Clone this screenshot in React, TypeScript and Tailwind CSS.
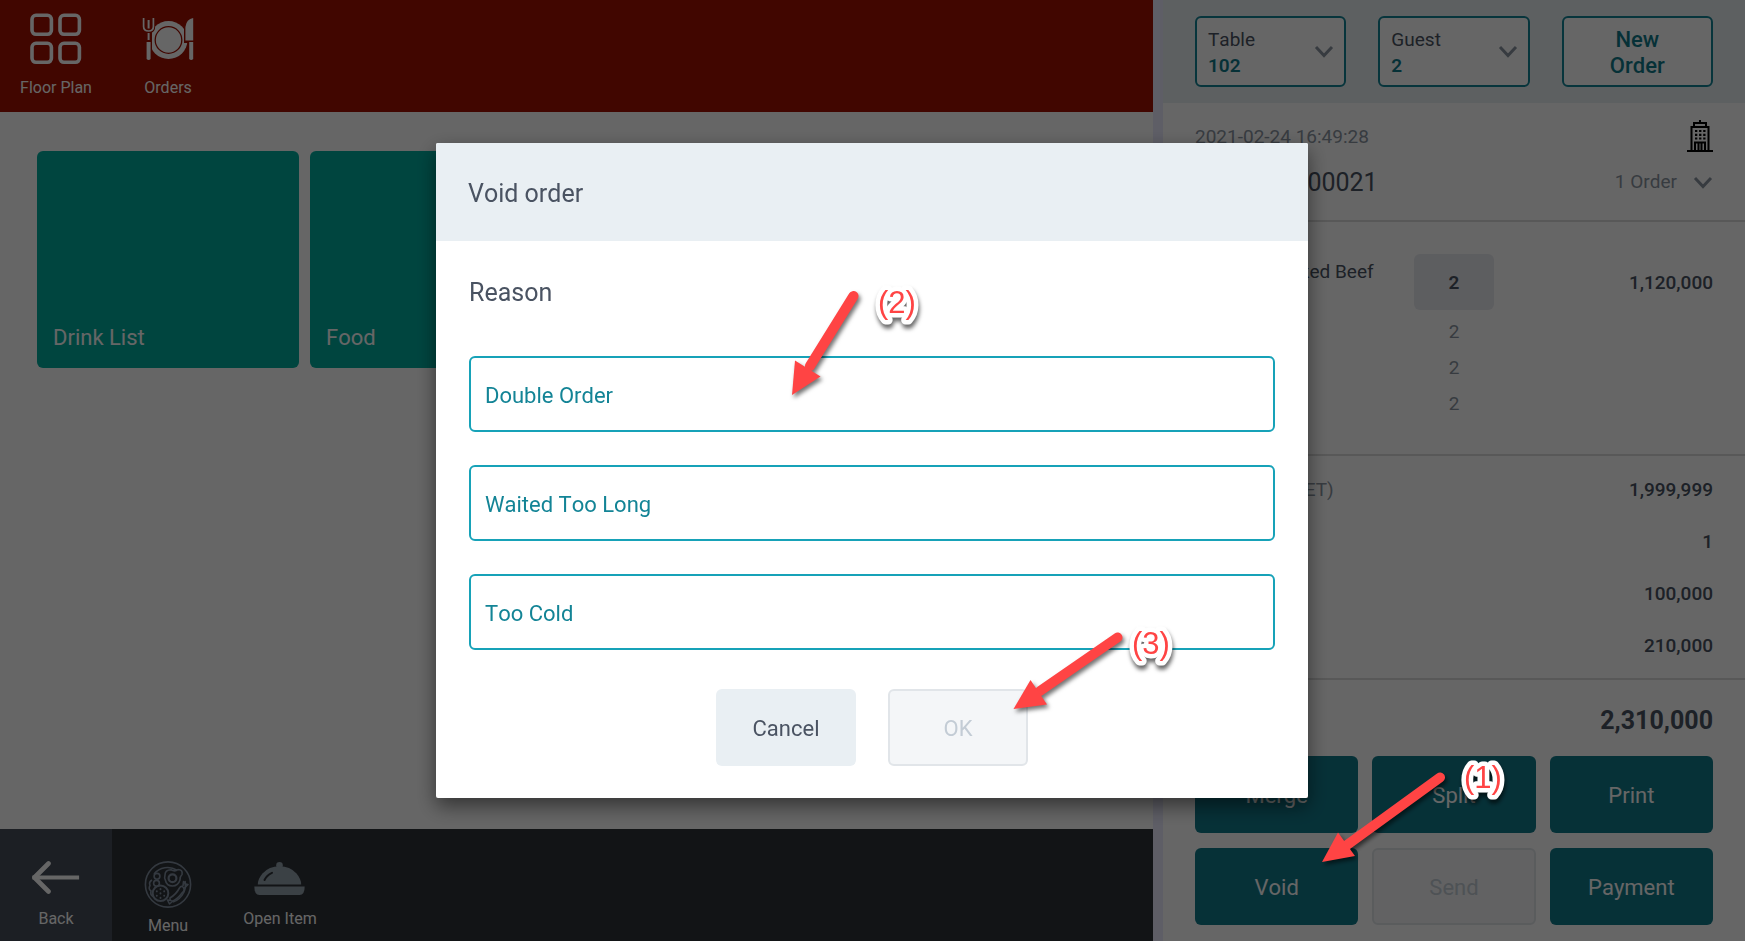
import { useState, type ReactNode } from 'react';

const categories = ['Drink List', 'Food'];

const reasons = ['Double Order', 'Waited Too Long', 'Too Cold'];

const totals = [
  { label: 'Sub Total: (NET)', value: '1,999,999' },
  { label: 'Discount', value: '1' },
  { label: 'Service', value: '100,000' },
  { label: 'VAT', value: '210,000' },
];

const actions = [
  { name: 'Merge' },
  { name: 'Split' },
  { name: 'Print' },
  { name: 'Void' },
  { name: 'Send', disabled: true },
  { name: 'Payment' },
];

function FloorPlanIcon() {
  return (
    <svg width="52" height="52" viewBox="0 0 52 52" fill="none" stroke="currentColor" strokeWidth="3.6">
      <rect x="2" y="2.3" width="19.4" height="19" rx="4" />
      <rect x="30" y="2.3" width="19.4" height="19" rx="4" />
      <rect x="2" y="30.3" width="19.4" height="19" rx="4" />
      <rect x="30" y="30.3" width="19.4" height="19" rx="4" />
    </svg>
  );
}

function OrdersIcon() {
  return (
    <svg width="52" height="52" viewBox="0 0 52 52" fill="currentColor">
      <circle cx="26.5" cy="27" r="19" />
      <circle cx="26.5" cy="27" r="13.3" fill="none" stroke="#a31000" strokeWidth="1.3" />
      {/* fork */}
      <path
        d="M0.8 5 V13 Q0.8 18.5 4.8 18.8 V46 Q6.8 48.5 9 46 V18.8 Q12.2 18 12.2 13 V5 Z"
        fill="#a31000"
        stroke="#a31000"
        strokeWidth="2"
      />
      <path d="M1.6 5 V13.5 Q1.6 18 6.6 18 Q11.4 18 11.4 13.5 V5" fill="none" stroke="currentColor" strokeWidth="1.7" />
      <path d="M5.6 7 H7.6 V15.5 H5.6 Z M5.6 20 H7.6 V27 H5.6 Z M4.6 29 H8.6 V46 Q6.6 48 4.6 46 Z" />
      {/* knife */}
      <path d="M51.2 5 V46.5 H46.5 V29 H43 V14 Q44 6 51.2 5 Z" fill="#a31000" stroke="#a31000" strokeWidth="2" />
      <path d="M51.2 5 V27.4 H43.4 V14 Q44.4 6 51.2 5 Z M47.2 29 H51.2 V46 Q49.2 48 47.2 46 Z" />
    </svg>
  );
}

function BackIcon() {
  return (
    <svg width="48" height="40" viewBox="0 0 48 40" fill="none" stroke="currentColor" strokeLinecap="round">
      <path d="M2.5 16.5 H45" strokeWidth="4.2" strokeLinecap="square" />
      <path d="M16.5 2.5 L2.5 16.5 L16.5 30.5" strokeWidth="4.6" strokeLinejoin="round" />
    </svg>
  );
}

function MenuIcon() {
  return (
    <svg width="48" height="47" viewBox="0 0 48 47" fill="none" stroke="currentColor" strokeWidth="1.6" strokeLinejoin="round">
      <circle cx="24" cy="23.5" r="22.6" />
      <path d="M10 13 A17.5 17.5 0 0 1 33 9.2" />
      <path d="M8 19 Q4.5 21 6 24.5 Q4 28 7 30 Q6 34 9 35.5" />
      <path d="M41 20 A17.5 17.5 0 0 1 40 31 Q36 39 29 41" />
      {/* egg */}
      <path d="M21 14 Q21 9 27 8.8 Q31 11 34 8.5 Q39 8.5 38 13.5 Q35.5 16 36 19 Q34 25 28.5 25 Q22.5 25 21.5 19.5 Q20 17 21 14 Z" />
      <circle cx="28.5" cy="17.3" r="3.9" strokeWidth="2.2" />
      {/* tomatoes */}
      <circle cx="13" cy="15.3" r="2.9" />
      <circle cx="12.5" cy="22.3" r="2.9" />
      {/* cracker */}
      <circle cx="16.5" cy="32.3" r="7.8" strokeWidth="2" />
      <path
        d="M16.5 28 v.2 M12.8 30.2 v.2 M20.2 30.2 v.2 M16.5 32.3 v.2 M12.8 34.6 v.2 M20.2 34.6 v.2 M16.5 36.8 v.2"
        strokeWidth="1.9"
        strokeLinecap="round"
      />
      {/* sausage */}
      <path d="M38.5 25.5 Q42 29 38 32 Q33.5 38 29 40 Q25.5 40 26 37 Q32 33.5 35.5 27 Q36.5 25 38.5 25.5 Z" />
      <path d="M39 25 L39.5 20.5 L41.5 23 L44 23.5 L40.5 27 M27 39.5 L23.5 39 L25.5 43 L29 40" />
    </svg>
  );
}

function ClocheIcon() {
  return (
    <svg width="52" height="40" viewBox="0 0 52 40" fill="currentColor">
      <circle cx="25.5" cy="4.2" r="3.3" />
      <path d="M3.8 23.5 Q3.8 18 8.5 12.5 Q15 5.3 25.5 5.3 Q36 5.3 42.500 12.500 Q47.200 18 47.200 23.500 Z" />
      <path d="M0.300 25.500 H50.700 Q50.700 34 45.500 34 H5.500 Q0.300 34 0.300 25.500 Z" />
      <path d="M10.500 19 Q12.500 14.500 18 11.800" fill="none" stroke="#2e3238" strokeWidth="2" strokeLinecap="round" />
    </svg>
  );
}

function BuildingIcon() {
  return (
    <svg width="26" height="32" viewBox="0 0 26 32" fill="none" stroke="#000" strokeWidth="2">
      <path d="M0 31 H26" />
      <path d="M4.5 31 V7 H21.5 V31" />
      <path d="M7 6.5 V3 H19 V6.5 M13 0 V3" />
      <path d="M8 11 H18.5 M8 14.8 H18.5 M8 18.5 H18.5" strokeDasharray="2.3 1.8" strokeWidth="2.2" />
      <path d="M8 31 V22.5 H18 V31 M11.5 23 V31 M14.5 23 V31" />
    </svg>
  );
}

function Chevron() {
  return (
    <svg className="shrink-0 text-[#8b95a1]" width="20" height="13" viewBox="0 0 20 13" fill="none" stroke="currentColor" strokeWidth="3">
      <path d="M2 2 L10 10.5 L18 2" />
    </svg>
  );
}

function NavItem({ label, icon }: { label: string; icon: ReactNode }) {
  return (
    <button className="flex w-28 flex-col items-center gap-[11px] pt-[13px] text-base text-white">
      {icon}
      {label}
    </button>
  );
}

function PickerBox({ label, value }: { label: string; value: string }) {
  return (
    <label className="flex h-[71px] items-center rounded-md border-2 border-[#138496] bg-white pl-[11px] pr-2.5 text-[19px] leading-[26px] text-[#4a5362]">
      <span className="flex min-w-0 flex-1 flex-col pt-0.5">
        {label}
        <select className="w-full appearance-none bg-transparent font-semibold text-[#117a8b]" defaultValue={value}>
          <option>{value}</option>
        </select>
      </span>
      <Chevron />
    </label>
  );
}

type MarkerProps = {
  className: string;
  width: number;
  height: number;
  shaft: string;
  head: string;
  textX: number;
  textY: number;
  text: string;
};

// red callout arrow with its step number
function Marker({ className, width, height, shaft, head, textX, textY, text }: MarkerProps) {
  return (
    <svg className={className} width={width} height={height} viewBox={`0 0 ${width} ${height}`}>
      <g className="drop-shadow-[2px_3px_2px_rgba(0,0,0,0.55)]">
        <path d={shaft} stroke="#ff4444" strokeWidth="10" strokeLinecap="round" />
        <path d={head} fill="#ff4444" />
      </g>
      <text
        x={textX}
        y={textY}
        className="fill-[#ff4444] stroke-white font-['Liberation_Sans',sans-serif] text-[31px] drop-shadow-[1px_4px_2px_rgba(0,0,0,0.6)]"
        strokeWidth="9"
        strokeLinejoin="round"
        paintOrder="stroke"
      >
        {text}
      </text>
    </svg>
  );
}

function OrderPanel() {
  return (
    <aside className="flex w-[592px] shrink-0 flex-col border-l-10 border-[#ebebff] bg-white text-[19px] text-[#4a5362]">
      <div className="grid grid-cols-3 gap-8 bg-[#e9eff3] px-8 py-4">
        <PickerBox label="Table" value="102" />
        <PickerBox label="Guest" value="2" />
        <button className="h-[71px] rounded-md border-2 border-[#138496] bg-white px-8 pt-0.5 text-[22px] leading-[26px] font-medium text-[#117a8b]">
          New Order
        </button>
      </div>

      <div className="border-b-2 border-[#dcdcdc] px-8 pt-[17px] pb-5">
        <div className="flex h-8 items-center justify-between text-[#8b95a1]">
          <span className="pt-0.5">2021-02-24 16:49:28</span>
          <BuildingIcon />
        </div>
        <div className="mt-3 flex h-9 items-center justify-between">
          <span className="pt-0.5 text-[25px]">2102240000021</span>
          <button className="flex items-center gap-4 text-[#8b95a1]">
            1 Order
            <Chevron />
          </button>
        </div>
      </div>

      <div className="border-b-2 border-[#dcdcdc] px-8 py-8">
        <div className="flex items-center">
          <div className="w-[219px] pr-8 leading-5">Combo Smoked Beef (Set)</div>
          <button className="h-14 w-20 rounded-md bg-[#e9ebf0] pt-0.5 font-semibold">2</button>
          <span className="flex-1 pt-0.5 text-right font-medium">1,120,000</span>
        </div>
        <div className="mt-1 ml-[219px] w-20 text-center leading-9 text-[#8b95a1]">
          <div>2</div>
          <div>2</div>
          <div>2</div>
        </div>
      </div>

      <div className="border-b-2 border-[#dcdcdc] px-8 pt-2 pb-1.5">
        {totals.map((row) => (
          <div key={row.label} className="flex h-[52px] items-center justify-between">
            <span className="text-[#8b95a1]">{row.label}</span>
            <span className="font-medium">{row.value}</span>
          </div>
        ))}
      </div>

      <div className="flex flex-1 items-center justify-between px-8 pt-1.5 text-[25px] font-bold">
        <span>Total</span>
        <span>2,310,000</span>
      </div>

      <div className="grid grid-cols-3 gap-x-3.5 gap-y-[15px] px-8 pb-4 text-[22px]">
        {actions.map((action) => (
          <button
            key={action.name}
            disabled={action.disabled}
            className="h-[77px] rounded-md bg-[#117a8b] pt-0.5 text-white disabled:border-2 disabled:border-[#e1e5e9] disabled:bg-[#f4f6f8] disabled:text-[#c3ccd5]"
          >
            {action.name}
          </button>
        ))}
      </div>
    </aside>
  );
}

function VoidDialog() {
  const [reason, setReason] = useState('');

  return (
    <div
      role="dialog"
      aria-modal="true"
      aria-labelledby="void-title"
      className="relative w-full max-w-[872px] rounded-xs bg-white text-[#4a5362] shadow-[0_8px_20px_rgba(0,0,0,0.5)]"
    >
      <h2 id="void-title" className="rounded-t-xs bg-[#e9eff3] px-8 pt-[33px] pb-[29px] text-[25px] leading-9">
        Void order
      </h2>
      <div className="px-[33px] pt-[34px] pb-8">
        <p className="text-[25px] leading-9">Reason</p>
        <div className="mt-[45px] flex flex-col gap-[33px]">
          {reasons.map((name) => (
            <button
              key={name}
              onClick={() => setReason(name)}
              className="h-[76px] rounded-md border-2 border-[#17a2b8] px-3.5 pt-0.5 text-left text-[22px] text-[#138496]"
            >
              {name}
            </button>
          ))}
        </div>
        <div className="mt-[39px] flex justify-center gap-8 text-[22px]">
          <button className="h-[77px] w-[140px] rounded-md bg-[#e9eff3] pt-0.5">Cancel</button>
          <button
            disabled={!reason}
            className="h-[77px] w-[140px] rounded-md bg-[#117a8b] pt-0.5 text-white disabled:border-2 disabled:border-[#e1e5e9] disabled:bg-[#f4f6f8] disabled:text-[#c3ccd5]"
          >
            OK
          </button>
        </div>
      </div>

      <Marker
        className="pointer-events-none absolute top-[137px] left-[344px]"
        width={160}
        height={130}
        shaft="M73.5 16 L30 86"
        head="M12 115 L15 80.5 L40.5 96.5 Z"
        textX={98}
        textY={33}
        text="(2)"
      />
      <Marker
        className="pointer-events-none absolute top-[477px] left-[564px]"
        width={200}
        height={110}
        shaft="M117.5 17.5 L40 71"
        head="M13.5 89 L30.5 60 L47 84.5 Z"
        textX={132}
        textY={34}
        text="(3)"
      />
    </div>
  );
}

export default function App() {
  return (
    <div className="flex min-h-screen font-[Roboto,sans-serif] [font-kerning:none]">
      <div className="flex min-w-0 flex-1 flex-col bg-white">
        <header className="flex h-28 bg-[#a31000]">
          <NavItem label="Floor Plan" icon={<FloorPlanIcon />} />
          <NavItem label="Orders" icon={<OrdersIcon />} />
        </header>

        <main className="flex flex-1 flex-wrap content-start gap-[11px] px-[37px] py-[39px]">
          {categories.map((name) => (
            <button
              key={name}
              className="flex h-[217px] w-[262px] items-end rounded-md bg-[#00ad9f] px-4 pb-3.5 text-[22px] text-white"
            >
              {name}
            </button>
          ))}
        </main>

        {/* Bottom bar */}
        <footer className="flex h-28 bg-[#2e3238] text-base text-white">
          <button className="flex w-28 flex-col items-center gap-1.5 bg-[#464e5a] pt-8">
            <BackIcon />
            Back
          </button>
          <button className="flex w-28 flex-col items-center gap-1.5 pt-8">
            <span className="text-[#8290a0]">
              <MenuIcon />
            </span>
            Menu
          </button>
          <button className="flex w-28 flex-col items-center gap-1.5 pt-8">
            <span className="text-[#94a2ac]">
              <ClocheIcon />
            </span>
            Open Item
          </button>
        </footer>
      </div>

      <OrderPanel />

      {/* Backdrop */}
      <div className="fixed inset-0 flex items-center justify-center bg-black/60 pr-px">
        <VoidDialog />
        <Marker
          className="pointer-events-none absolute right-[225px] bottom-[61px]"
          width={210}
          height={130}
          shaft="M130 27.5 L37 95"
          head="M12 112 L28 82.5 L45 106 Z"
          textX={154}
          textY={38}
          text="(1)"
        />
      </div>
    </div>
  );
}
